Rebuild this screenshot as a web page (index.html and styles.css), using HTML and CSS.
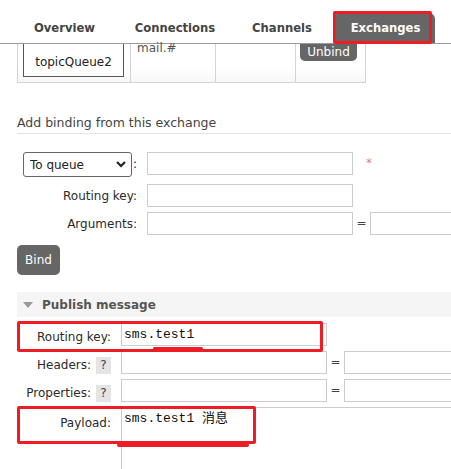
FILE: index.html
```html
<!DOCTYPE html>
<html>
<head>
<meta charset="utf-8">
<link rel="stylesheet" href="styles.css">
</head>
<body>
<nav class="tabs">
  <a class="tab tab-overview">Overview</a>
  <a class="tab tab-conn">Connections</a>
  <a class="tab tab-chan">Channels</a>
  <a class="tab tab-active">Exchanges</a>
</nav>

<table class="bindings">
  <colgroup>
    <col class="w1"><col class="w2"><col class="w3"><col class="w4">
  </colgroup>
  <tr>
    <td class="c1"><span class="queue-box">topicQueue2</span></td>
    <td class="c2">mail.#</td>
    <td class="c3"></td>
    <td class="c4"><span class="btn-unbind">Unbind</span></td>
  </tr>
</table>

<h2 class="sec-title">Add binding from this exchange</h2>

<div class="form bind-form">
  <div class="lbl lbl-select">
    <span class="select-wrap">
      <select class="select"><option>To queue</option></select>
      <svg class="chev" width="10" height="7" viewBox="0 0 10 7"><polyline points="1,1 5,5 9,1" fill="none" stroke="#222" stroke-width="2.2"/></svg>
    </span>
    <span class="colon">:</span>
  </div>
  <input class="inp" type="text">
  <div class="extra"><span class="star">*</span></div>

  <div class="lbl">Routing key:</div>
  <input class="inp" type="text">
  <div class="extra"></div>

  <div class="lbl">Arguments:</div>
  <input class="inp" type="text">
  <div class="extra"><span class="eq">=</span><input class="inp inp-val" type="text"></div>
</div>

<div class="bind-row"><button class="btn-bind">Bind</button></div>

<div class="pub-head"><span class="tri"></span>Publish message</div>

<div class="pub-wrap">
  <div class="form pub-form">
    <div class="lbl">Routing key:</div>
    <input class="inp mono" type="text" value="sms.test1">
    <div class="extra"></div>

    <div class="lbl">Headers: <span class="help">?</span></div>
    <input class="inp" type="text">
    <div class="extra"><span class="eq">=</span><input class="inp inp-val" type="text"></div>

    <div class="lbl">Properties: <span class="help">?</span></div>
    <input class="inp" type="text">
    <div class="extra"><span class="eq">=</span><input class="inp inp-val" type="text"></div>

    <div class="lbl lbl-payload">Payload:</div>
    <textarea class="payload mono">sms.test1 消息</textarea>
  </div>
  <div class="mark mark-rk"></div>
  <div class="mark-line line-rk"></div>
  <div class="mark mark-pl"></div>
  <div class="mark-line line-pl"></div>
</div>
</body>
</html>
```

FILE: styles.css
```css
html, body {
  margin: 0;
  padding: 0;
  overflow: hidden;
  background: #fff;
}
body {
  font-family: "DejaVu Sans", Verdana, sans-serif;
  font-size: 12px;
  color: #2a2a2a;
  width: 451px;
  height: 469px;
}

/* nav */
.tabs {
  display: flex;
  align-items: flex-end;
  height: 44px;
  box-sizing: border-box;
  padding-left: 13px;
  border-bottom: 1px solid #9a9a9a;
}
.tab {
  display: block;
  height: 30px;
  line-height: 31px;
  text-align: center;
  font-weight: bold;
  font-size: 11.6px;
  color: #444;
}
.tab-overview { width: 103px; }
.tab-conn { width: 118px; }
.tab-chan { width: 96px; }
.tab-active {
  position: relative;
  width: 99px;
  margin-left: 6px;
  background: #666;
  color: #fff;
  border-radius: 2px 6px 0 0;
}
.tab-active::after {
  content: "";
  position: absolute;
  left: -3px;
  top: -2px;
  width: 99px;
  height: 33px;
  border: 3px solid #ee1c25;
  border-radius: 2px;
  box-sizing: border-box;
}

/* bindings table */
.bindings {
  border-collapse: collapse;
  table-layout: fixed;
  width: 348px;
  margin-left: 17px;
}
.w1 { width: 113px; }
.w2 { width: 85px; }
.w3 { width: 80px; }
.w4 { width: 70px; }
.bindings td {
  height: 38px;
  padding: 0;
  border: 1px solid #d4d4d4;
  border-top: none;
  vertical-align: top;
  background: linear-gradient(#fff 60%, #f7f7f7);
}
.queue-box {
  display: block;
  margin-left: 5px;
  width: 99px;
  height: 32px;
  border: 1px solid #555;
  border-top: none;
  text-align: center;
  line-height: 36px;
  color: #222;
  background: #fff;
}
.bindings td.c2 {
  padding-left: 6px;
  color: #555;
  line-height: 8px;
}
.btn-unbind {
  display: block;
  margin-left: 4px;
  width: 57px;
  height: 17px;
  line-height: 17px;
  background: #666;
  color: #fff;
  text-align: center;
  border-radius: 0 0 5px 5px;
}

/* section title */
.sec-title {
  margin: 32px 0 0 17px;
  padding: 0 0 2px;
  font-size: 12.5px;
  font-weight: normal;
  line-height: 16px;
  color: #444;
  border-bottom: 1px solid #e4e4e4;
}

/* forms */
.form {
  display: grid;
  align-items: start;
}
.bind-form {
  margin: 18px 0 0 17px;
  grid-template-columns: 120px 206px 1fr;
  column-gap: 10px;
  row-gap: 5px;
}
.lbl {
  display: flex;
  justify-content: flex-end;
  align-items: center;
  gap: 5px;
  padding-top: 4px;
  line-height: 16px;
  color: #2a2a2a;
  white-space: nowrap;
}
.lbl-select {
  padding-top: 0;
  gap: 1px;
  height: 27px;
  align-items: flex-start;
}
.colon { line-height: 23px; padding-top: 1px; }
.select-wrap {
  position: relative;
  display: block;
  width: 109px;
  height: 25px;
}
.select {
  appearance: none;
  -webkit-appearance: none;
  width: 109px;
  height: 25px;
  border: 1px solid #666;
  border-radius: 3px;
  background: #fff;
  font-family: "DejaVu Sans", sans-serif;
  font-size: 12px;
  color: #222;
  padding: 0 0 0 6px;
  margin: 0;
}
.chev {
  position: absolute;
  right: 6px;
  top: 9px;
}
.inp {
  display: block;
  box-sizing: border-box;
  height: 23px;
  width: 100%;
  margin: 0;
  border: 1px solid #ccc;
  background: #fff;
  padding: 0 2px;
  font-family: "DejaVu Sans", sans-serif;
  font-size: 12px;
  color: #111;
}
.extra {
  display: flex;
  align-items: flex-start;
  min-width: 0;
}
.star {
  margin-left: 3px;
  margin-top: 4px;
  color: #e07f95;
  font-size: 12px;
}
.eq {
  width: 17px;
  flex: none;
  text-align: center;
  line-height: 22px;
  color: #444;
}
.inp-val {
  flex: 1;
  width: auto;
  min-width: 0;
  border-right: none;
}
.bind-form .extra .eq { margin-left: -10px; }

.bind-row { margin: 10px 0 0 17px; }
.btn-bind {
  display: block;
  width: 43px;
  height: 30px;
  border: none;
  border-radius: 5px;
  background: #666;
  color: #fff;
  font-family: "DejaVu Sans", sans-serif;
  font-size: 12px;
  padding: 0;
}

/* publish */
.pub-head {
  margin: 17px 0 0 17px;
  height: 25px;
  display: flex;
  align-items: center;
  background: #f5f5f5;
  font-weight: bold;
  color: #555;
}
.tri {
  width: 0;
  height: 0;
  margin: 1px 9px 0 6px;
  border-left: 5px solid transparent;
  border-right: 5px solid transparent;
  border-top: 6px solid #999;
}
.pub-wrap {
  position: relative;
  padding: 6px 0 0 17px;
}
.pub-form {
  grid-template-columns: 94px 206px 1fr;
  column-gap: 10px;
  row-gap: 5px;
}
.pub-form .lbl { padding-top: 6px; line-height: 17px; }
.pub-form .lbl-payload { padding-top: 8px; }
.help {
  display: inline-block;
  width: 15px;
  height: 17px;
  line-height: 17px;
  text-align: center;
  background: #e4e4e4;
  color: #444;
}
.pub-form .extra .eq { margin-left: -10px; }
.mono {
  font-family: "Liberation Mono", "Noto Sans CJK SC", monospace;
  font-size: 13px;
  color: #111;
}
.payload {
  grid-column: 2 / 4;
  display: block;
  box-sizing: border-box;
  width: 100%;
  height: 80px;
  margin: 0;
  border: 1px solid #ccc;
  border-right: none;
  padding: 2px 2px;
  resize: none;
  line-height: 17px;
}

/* annotations */
.mark {
  position: absolute;
  border: 3px solid #ee1c25;
  border-radius: 2px;
  box-sizing: border-box;
}
.mark-rk { left: 17px; top: 4px; width: 306px; height: 31px; }
.mark-pl { left: 17px; top: 89px; width: 239px; height: 38px; }
.mark-line {
  position: absolute;
  background: #ee1c25;
  border-radius: 2px;
}
.line-rk { left: 153px; top: 30px; width: 50px; height: 3px; }
.line-pl { left: 117px; top: 126px; width: 132px; height: 4px; }
```
